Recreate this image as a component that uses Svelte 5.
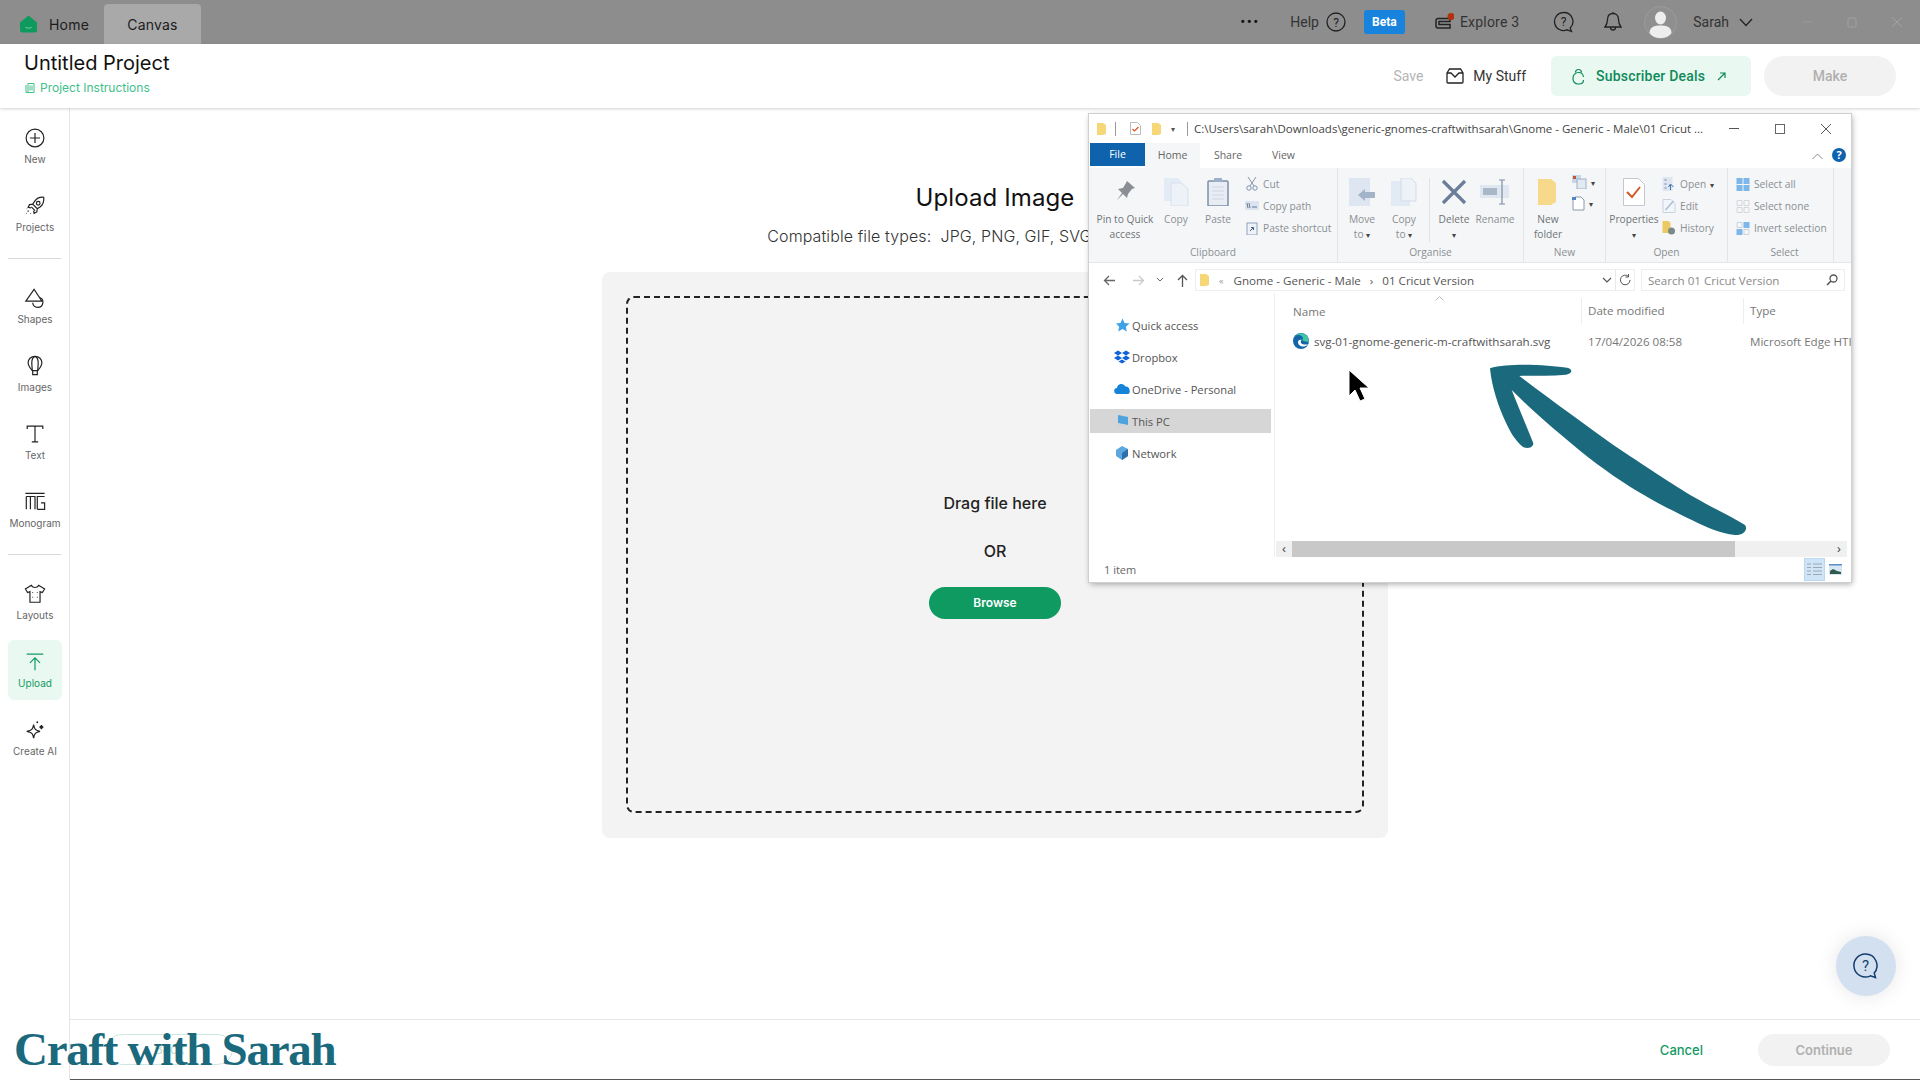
<script lang="ts">
  const navFolders = [
    { label: 'Quick access', kind: 'star' },
    { label: 'Dropbox', kind: 'dropbox' },
    { label: 'OneDrive - Personal', kind: 'cloud' },
    { label: 'This PC', kind: 'pc', active: true },
    { label: 'Network', kind: 'net' },
  ];
</script>

<div class="app">
  <header class="topbar">
    <div class="tabs">
      <div class="tab home">
        <svg width="17" height="18" viewBox="0 0 17 18"><path d="M0 7.500 8.500 0.500 17 7.500V15a2.500 2.500 0 0 1-2.500 2.500h-12A2.500 2.500 0 0 1 0 15Z" fill="#0d9a5c"/><path d="M5.500 12.500q3 1.500 6 0" fill="none" stroke="#7fc9a6" stroke-width="1"/></svg>
        <span>Home</span>
      </div>
      <div class="tab canvas">Canvas</div>
    </div>
    <div class="top-actions">
      <span class="dots">•••</span>
      <span class="help">Help</span>
      <svg class="help-ico" width="20" height="20" viewBox="0 0 20 20"><circle cx="10" cy="10" r="9" fill="none" stroke="#222" stroke-width="1.300"/><text x="10" y="14.500" text-anchor="middle" class="q">?</text></svg>
      <span class="beta">Beta</span>
      <span class="explore">
        <svg width="20" height="20" viewBox="0 0 20 20"><path d="M2 8.500a2 2 0 0 1 2-2h12v3H5v3h11v3.500H4a2 2 0 0 1-2-2Z" fill="none" stroke="#222" stroke-width="1.500"/><circle cx="17" cy="4.500" r="3.500" fill="#b3300f"/></svg>
        Explore 3
      </span>
      <svg class="bubble" width="21" height="22" viewBox="0 0 21 22"><path d="M10.500 1.500a9 9 0 1 0 3.500 17.300l4.500 1.700-1.300-3.600a9 9 0 0 0-6.700-15.400Z" fill="none" stroke="#222" stroke-width="1.300"/><text x="10.500" y="14.500" text-anchor="middle" class="q">?</text></svg>
      <svg class="bell" width="18" height="22" viewBox="0 0 18 22"><path d="M9 2.500c-3.500 0-5.500 2.500-5.500 6 0 4-1 5.500-2.500 7.500h16c-1.500-2-2.500-3.500-2.500-7.500 0-3.500-2-6-5.500-6ZM9 1v1.500M6.500 16.500a2.500 2.500 0 0 0 5 0" fill="none" stroke="#222" stroke-width="1.300"/></svg>
      <svg class="avatar" width="33" height="33" viewBox="0 0 33 33"><circle cx="16.500" cy="16.500" r="16" fill="#8f8f8f" stroke="#9c9c9c"/><ellipse cx="16.500" cy="12" rx="5.500" ry="6.500" fill="#eee"/><path d="M5.500 27c0-6 5-7.500 11-7.500s11 1.500 11 7.500c-2 3-6 5-11 5s-9-2-11-5Z" fill="#eee"/></svg>
      <span class="user">Sarah</span>
      <svg width="14" height="9" viewBox="0 0 14 9"><path d="M1 1l6 6.500L13 1" fill="none" stroke="#222" stroke-width="1.300"/></svg>
      <div class="win-ctrl">
        <svg width="12" height="12" viewBox="0 0 12 12"><path d="M1 6h10" stroke="#9a9a9a"/></svg>
        <svg width="12" height="12" viewBox="0 0 12 12"><rect x="2" y="2" width="8" height="9" rx="1.500" fill="none" stroke="#a3a3a3"/></svg>
        <svg width="12" height="12" viewBox="0 0 12 12"><path d="M1 1l10 10M11 1 1 11" stroke="#a3a3a3"/></svg>
      </div>
    </div>
  </header>

  <section class="projectbar">
    <div class="project-info">
      <h1>Untitled Project</h1>
      <div class="instructions">
        <svg width="10" height="11" viewBox="0 0 10 11"><path d="M3 1.500h6v9H3ZM1 3v7.500h2M5 3.500v5M7 3.500v5" fill="none" stroke="#3fbf8a"/></svg>
        Project Instructions
      </div>
    </div>
    <div class="project-actions">
      <span class="save">Save</span>
      <span class="mystuff">
        <svg width="18" height="16" viewBox="0 0 18 16"><path d="M1 5l2.500-4h11L17 5v9a1 1 0 0 1-1 1H2a1 1 0 0 1-1-1ZM1 5h4l4 4 4-4h4" fill="none" stroke="#222" stroke-width="1.300"/></svg>
        My Stuff
      </span>
      <div class="deals">
        <svg width="13" height="17" viewBox="0 0 13 17"><path d="M3.500 4.500a3 3 0 0 1 6 0M11.500 9a5 5 0 0 0-5-4.500A5.500 5.500 0 0 0 1 10v1a5 5 0 0 0 5 5h1c2.500 0 4.500-1.500 4.500-4" fill="none" stroke="#0e8a5a" stroke-width="1.200"/></svg>
        <span>Subscriber Deals</span>
        <svg class="deal-arrow" width="9" height="9" viewBox="0 0 9 9"><path d="M1 8l7-7M3 1h5v5" fill="none" stroke="#0e8a5a" stroke-width="1.200"/></svg>
      </div>
      <div class="make">Make</div>
    </div>
  </section>

  <div class="workspace">
    <nav class="sidebar">
      <div class="nav-item">
        <svg viewBox="0 0 24 24"><circle cx="12" cy="12" r="9.700"/><path d="M12 6.500v11M6.500 12h11"/></svg>
        <span>New</span>
      </div>
      <div class="nav-item">
        <svg viewBox="0 0 24 24"><path d="M21.500 2.500c-4-.5-7.500 1-10 4.500l-2 3 5 5 3-2c3.500-2.500 4.500-6.500 4-10.500ZM9.500 10l-3.500.500-1.500 3 3 .500M14.500 15l-.500 3.500-3 1.500-.500-3M8 13l4 4"/><circle cx="15.500" cy="9" r="2"/><path d="M5 17l-1 1M3 15h.500M7 20.500l.500-.500M2.500 20h.500"/></svg>
        <span>Projects</span>
      </div>
      <div class="divider"></div>
      <div class="nav-item">
        <svg viewBox="0 0 24 24"><path d="M11 2.500 2 15.500h17.500Z"/><path d="M16.500 11.200a5.600 5.600 0 1 1-7 6"/></svg>
        <span>Shapes</span>
      </div>
      <div class="nav-item">
        <svg viewBox="0 0 24 24"><path d="M12 1.500c-4.500 0-7.500 3-7.500 7 0 3.500 2.500 6 4.500 8.500h6c2-2.500 4.500-5 4.500-8.500 0-4-3-7-7.500-7Z"/><path d="M12 1.500c-2.500 1-3.500 4-3.500 7 0 3 .500 6 .500 8.500M12 1.500c2.500 1 3.500 4 3.500 7 0 3-.500 6-.500 8.500M9.500 17v4.500h5V17"/></svg>
        <span>Images</span>
      </div>
      <div class="nav-item">
        <svg viewBox="0 0 24 24"><path d="M3.500 6.500V3.500h17v3M12 3.500v17M8.500 20.500h7"/></svg>
        <span>Text</span>
      </div>
      <div class="nav-item">
        <svg viewBox="0 0 24 24"><path d="M1.500 2.500h21M2.500 6h9.500v14M2.500 6v14M7 6v14M14.500 20V6h8M14.500 20h8v-7h-4"/></svg>
        <span>Monogram</span>
      </div>
      <div class="divider"></div>
      <div class="nav-item">
        <svg viewBox="0 0 24 24"><path d="M8 2.500 1.500 6.500l2.500 4 2.500-1v11.500h11V9.500l2.500 1 2.500-4-6.500-4a4.500 4.500 0 0 1-8 0Z"/><path d="M9.500 10v1M14.500 10v1M9.500 15v1M14.500 15v1" stroke-width="1"/></svg>
        <span>Layouts</span>
      </div>
      <div class="nav-item active">
        <svg viewBox="0 0 24 24"><path d="M3 3.500h18M12 21V7.500M6.500 13 12 7.500l5.500 5.500"/></svg>
        <span>Upload</span>
      </div>
      <div class="nav-item">
        <svg viewBox="0 0 24 24"><path d="M10.500 6c.7 5 2 6.500 7 7.500-5 1-6.300 2.500-7 7.500-.7-5-2-6.500-7.500-7.500 5.500-1 6.800-2.500 7.500-7.500Z"/><path d="M19 6.500c.2 1.500.6 2 2 2.300-1.400.3-1.800.8-2 2.300-.2-1.500-.6-2-2-2.300 1.400-.3 1.800-.8 2-2.300Z" fill="#222"/><circle cx="14.500" cy="3.500" r="1" fill="#222" stroke="none"/></svg>
        <span>Create AI</span>
      </div>
    </nav>

    <main class="main">
      <div class="content">
        <h2>Upload Image</h2>
        <p class="types">Compatible file types:&nbsp; JPG, PNG, GIF, SVG, BMP, HEIC, DXF</p>
        <div class="panel">
          <div class="dropzone">
            <div class="drag">Drag file here</div>
            <div class="or">OR</div>
            <div class="browse">Browse</div>
          </div>
        </div>
      </div>
      <footer class="footer">
        <div class="back">Back</div>
        <div class="footer-right">
          <span class="cancel">Cancel</span>
          <div class="continue">Continue</div>
        </div>
      </footer>
    </main>
  </div>

  <div class="fab">
    <svg width="28" height="28" viewBox="0 0 28 28"><path d="M13.500 2a11.500 11.500 0 1 0 5 21.800l5 1.700-1.300-4.500A11.500 11.500 0 0 0 13.500 2Z" fill="none" stroke="#123e6e" stroke-width="1.500"/><text x="13.500" y="18.500" text-anchor="middle" class="fab-q">?</text></svg>
  </div>

  <div class="logo">Craft with Sarah</div>

  <!-- explorer window sits on top of the page -->
  <div class="explorer">
    <div class="ex-title">
      <svg class="folder" width="9" height="12" viewBox="0 0 9 12"><path d="M0 0h6l3 2v9l-3 1H0Z" fill="#f6d778"/></svg>
      <i class="ex-sep"></i>
      <svg width="11" height="13" viewBox="0 0 11 13"><path d="M.5.500h7l3 3v9H.5Z" fill="#fff" stroke="#bbb"/><path d="M2.500 7l2 2 4-4" fill="none" stroke="#d9541e" stroke-width="1.200"/></svg>
      <svg class="folder" width="9" height="12" viewBox="0 0 9 12"><path d="M0 0h6l3 2v9l-3 1H0Z" fill="#f6d778"/></svg>
      <span class="mini-drop">▾</span>
      <i class="ex-sep"></i>
      <span class="ex-path">C:\Users\sarah\Downloads\generic-gnomes-craftwithsarah\Gnome - Generic - Male\01 Cricut ...</span>
      <div class="ex-ctrl">
        <svg width="12" height="12" viewBox="0 0 12 12"><path d="M1 5.500h10" stroke="#555"/></svg>
        <svg width="12" height="12" viewBox="0 0 12 12"><rect x="1.500" y="1.500" width="9" height="9" fill="none" stroke="#666"/></svg>
        <svg width="12" height="12" viewBox="0 0 12 12"><path d="M1 1l10 10M11 1 1 11" stroke="#555"/></svg>
      </div>
    </div>

    <div class="ex-tabs">
      <span class="ex-file">File</span>
      <span class="ex-tab on">Home</span>
      <span class="ex-tab share">Share</span>
      <span class="ex-tab">View</span>
      <svg class="ex-up" width="11" height="7" viewBox="0 0 11 7"><path d="M.5 6 5.500 1l5 5" fill="none" stroke="#888"/></svg>
      <span class="ex-help">?</span>
    </div>

    <div class="ribbon">
      <div class="group clipboard">
        <div class="group-body">
          <div class="big dark" style="width:72px">
            <svg width="24" height="28" viewBox="0 0 24 28"><path d="M14 3l8 7-3 1-4 5-1 4-4-4-6 6 5-7-4-4 5-1 3-5Z" fill="#8a8f96"/></svg>
            <span>Pin to Quick<br />access</span>
          </div>
          <div class="big" style="width:30px">
            <svg width="26" height="28" viewBox="0 0 26 28"><path d="M1 0h14l3 3v20H1Z" fill="#e3ebf5"/><path d="M8 5h11l6 6v17H8Z" fill="#edf2f8" stroke="#d7e0ea"/></svg>
            <span>Copy</span>
          </div>
          <div class="big" style="width:54px">
            <svg width="22" height="28" viewBox="0 0 22 28"><rect x="1" y="3" width="20" height="25" rx="1" fill="#e8edf4" stroke="#7b8fab" stroke-width="1.500"/><rect x="7" y="0" width="8" height="4" fill="#9db0c9"/><path d="M5 9h12M5 13h12M5 17h12M5 21h12" stroke="#ccd6e3"/></svg>
            <span>Paste</span>
          </div>
          <div class="small-list">
            <div class="small"><svg width="12" height="14" viewBox="0 0 12 14"><path d="M2 0l6 9M10 0 4 9" stroke="#8a93a0"/><circle cx="3" cy="11" r="2.200" fill="none" stroke="#7f95b3"/><circle cx="9" cy="11" r="2.200" fill="none" stroke="#7f95b3"/></svg>Cut</div>
            <div class="small"><svg width="14" height="10" viewBox="0 0 14 10"><rect width="14" height="9" fill="#dbe4f0"/><path d="M2 2l1 5M4 2l1 5M7 6h5" stroke="#66788f"/></svg>Copy path</div>
            <div class="small"><svg width="12" height="14" viewBox="0 0 12 14"><rect x="1" y="2" width="10" height="12" fill="#eef2f8" stroke="#8ea2bd"/><path d="M4 10l3-3M5 6.500h2.500V9" stroke="#445b7c" fill="none"/></svg>Paste shortcut</div>
          </div>
        </div>
        <div class="group-label">Clipboard</div>
      </div>

      <div class="group organise">
        <div class="group-body">
          <div class="big" style="width:48px">
            <svg width="28" height="28" viewBox="0 0 28 28"><rect x="1" y="0" width="21" height="28" fill="#dde6f1"/><path d="M10 17l7-6v3h10v6H17v3Z" fill="#a3b3c8"/></svg>
            <span>Move<br />to <em>▾</em></span>
          </div>
          <div class="big" style="width:36px">
            <svg width="26" height="28" viewBox="0 0 26 28"><rect x="0" y="3" width="19" height="25" fill="#e2eaf4"/><path d="M10 0h10l5 5v18H10Z" fill="#edf2f8" stroke="#d2dce8"/></svg>
            <span>Copy<br />to <em>▾</em></span>
          </div>
          <i class="v-sep"></i>
          <div class="big dark" style="width:48px">
            <svg width="26" height="28" viewBox="0 0 26 28"><path d="M2 3l22 22M24 3 2 25" stroke="#6a7d99" stroke-width="3.200"/></svg>
            <span>Delete<br /><em>▾</em></span>
          </div>
          <div class="big" style="width:34px">
            <svg width="30" height="28" viewBox="0 0 30 28"><rect x="0" y="7" width="29" height="13" fill="#dfe7f1"/><rect x="3" y="10" width="14" height="7" fill="#a9b7c9"/><path d="M19 2h6M22 2v24M19 26h6" stroke="#7d8ea5" stroke-width="1.200"/></svg>
            <span>Rename</span>
          </div>
        </div>
        <div class="group-label">Organise</div>
      </div>

      <div class="group newgroup">
        <div class="group-body">
          <div class="big dark" style="width:48px">
            <svg width="20" height="28" viewBox="0 0 20 28"><path d="M0 1h13l5 4v19l-5 3H0Z" fill="#f6d98a"/></svg>
            <span>New<br />folder</span>
          </div>
          <div class="tiny-stack">
            <div><svg width="15" height="14" viewBox="0 0 15 14"><rect x="0" y="0" width="9" height="8" fill="#c7d6e8"/><rect x="1" y="1" width="3" height="3" fill="#c2562f"/><rect x="5" y="4" width="9" height="10" fill="#e3e9f1" stroke="#9fb0c5"/></svg><em>▾</em></div>
            <div><svg width="13" height="15" viewBox="0 0 13 15"><path d="M3 1h6l3 3v10H1V4Z" fill="#fff" stroke="#8b98aa"/><path d="M0 1h4v3H0Z" fill="#4f86c4"/></svg><em>▾</em></div>
          </div>
        </div>
        <div class="group-label">New</div>
      </div>

      <div class="group opengroup">
        <div class="group-body">
          <div class="big dark" style="width:56px">
            <svg width="22" height="28" viewBox="0 0 22 28"><path d="M.5.500h15l6 6v21H.5Z" fill="#fff" stroke="#c4c8ce"/><path d="M4 14l5 5 8-10" fill="none" stroke="#d2582a" stroke-width="2"/></svg>
            <span>Properties<br /><em>▾</em></span>
          </div>
          <div class="small-list">
            <div class="small"><svg width="13" height="14" viewBox="0 0 13 14"><rect width="10" height="14" fill="#dde6f1"/><path d="M2 3h2M2 7h2M2 11h2" stroke="#6f7f95"/><path d="M8 13V8M6 10l2-3 3 3" stroke="#3f74b0" fill="none"/></svg>Open <em>▾</em></div>
            <div class="small"><svg width="13" height="14" viewBox="0 0 13 14"><path d="M.5.500h8l4 4v9H.5Z" fill="#f2f5f9" stroke="#c9d3df"/><path d="M3 11 11 2" stroke="#a8bdd6" stroke-width="1.500"/></svg>Edit</div>
            <div class="small"><svg width="13" height="14" viewBox="0 0 13 14"><path d="M0 0h6l2 2v10H0Z" fill="#ecc963"/><circle cx="9" cy="10" r="3.500" fill="#7a8a88"/></svg>History</div>
          </div>
        </div>
        <div class="group-label">Open</div>
      </div>

      <div class="group selectgroup">
        <div class="group-body">
          <div class="small-list">
            <div class="small"><svg width="13" height="13" viewBox="0 0 13 13"><rect width="13" height="13" fill="#7db6ea"/><path d="M6.500 0v13M0 6.500h13" stroke="#f4f6f8"/></svg>Select all</div>
            <div class="small"><svg width="13" height="13" viewBox="0 0 13 13"><path d="M.5.500h5v5h-5ZM7.500.500h5v5h-5ZM.5 7.500h5v5h-5ZM7.500 7.500h5v5h-5Z" fill="none" stroke="#d4d8dd"/></svg>Select none</div>
            <div class="small"><svg width="13" height="13" viewBox="0 0 13 13"><path d="M7 0h6v6H7ZM0 7h6v6H0Z" fill="#7db6ea"/><path d="M.5.500h5v5h-5ZM7.500 7.500h5v5h-5Z" fill="none" stroke="#ccd3da"/></svg>Invert selection</div>
          </div>
        </div>
        <div class="group-label">Select</div>
      </div>
    </div>

    <div class="addr-row">
      <svg width="13" height="11" viewBox="0 0 13 11"><path d="M12 5.500H1.500M6 1 1.500 5.500 6 10" fill="none" stroke="#666" stroke-width="1.300"/></svg>
      <svg class="fwd" width="13" height="11" viewBox="0 0 13 11"><path d="M1 5.500h10.500M7 1l4.500 4.500L7 10" fill="none" stroke="#c9c9c9" stroke-width="1.300"/></svg>
      <svg class="recent" width="8" height="6" viewBox="0 0 8 6"><path d="M1 1l3 3 3-3" fill="none" stroke="#666"/></svg>
      <svg class="up" width="11" height="13" viewBox="0 0 11 13"><path d="M5.500 13V2M1 6l4.500-4.500L10 6" fill="none" stroke="#555" stroke-width="1.300"/></svg>
      <div class="addr">
        <svg width="9" height="12" viewBox="0 0 9 12"><path d="M0 0h6l3 2v9l-3 1H0Z" fill="#f6d778"/></svg>
        <span class="crumb-more">«</span>
        <span>Gnome - Generic - Male</span>
        <b>›</b>
        <span>01 Cricut Version</span>
        <svg class="addr-drop" width="10" height="7" viewBox="0 0 10 7"><path d="M1 1l4 4 4-4" fill="none" stroke="#555" stroke-width="1.200"/></svg>
        <div class="refresh">
          <svg width="12" height="12" viewBox="0 0 12 12"><path d="M9.500 2.500A4.800 4.800 0 1 0 11 6M9.500 0v3h-3" fill="none" stroke="#555"/></svg>
        </div>
      </div>
      <div class="search">
        <span>Search 01 Cricut Version</span>
        <svg width="12" height="12" viewBox="0 0 12 12"><circle cx="7.500" cy="4.500" r="3.500" fill="none" stroke="#555" stroke-width="1.300"/><path d="M5 7 1 11" stroke="#555" stroke-width="1.600"/></svg>
      </div>
    </div>

    <div class="ex-body">
      <div class="nav-pane">
        {#each navFolders as f}
          <div class="pane-row" class:sel={f.active}>
            <svg width="16" height="16" viewBox="0 0 16 16">
              {#if f.kind === 'star'}
                <path d="M8.500 1.500l2 4.500 5 .5-3.700 3.300 1 4.700-4.300-2.500-4.300 2.500 1-4.700L2 6.500l4.500-.5Z" fill="#3ea2e8"/>
              {:else if f.kind === 'dropbox'}
                <path d="M4 1.500 8 4 4 6.500 0 4ZM12 1.500 16 4l-4 2.500L8 4ZM4 6.500 8 9l-4 2.500L0 9ZM12 6.500 16 9l-4 2.500L8 9ZM4.500 12.500 8 10.500l3.500 2L8 14.500Z" fill="#0f62d8"/>
              {:else if f.kind === 'cloud'}
                <path d="M3.500 13a3 3 0 0 1-.5-6 4.500 4.500 0 0 1 8.500-1.500A3.800 3.800 0 0 1 15.500 9a3.500 3.500 0 0 1-1 4Z" fill="#1583d8"/>
              {:else if f.kind === 'pc'}
                <path d="M4 2l10 2v8L4 10Z" fill="#4ea3dd"/><path d="M1 13l5-2 7 1-4 2H3Z" fill="#cfd4da"/>
              {:else}
                <path d="M8 1l6 3v7l-6 4-6-4V5Z" fill="#5ca7dd"/><path d="M8 8l6-4v7l-6 4Z" fill="#2d6fa8"/>
              {/if}
            </svg>
            <span>{f.label}</span>
          </div>
        {/each}
      </div>

      <div class="files">
        <div class="col-head">
          <span class="c-name">Name</span>
          <span class="c-date">Date modified</span>
          <span class="c-type">Type</span>
          <svg class="sort" width="9" height="5" viewBox="0 0 9 5"><path d="M.5 4.500l4-4 4 4" fill="none" stroke="#bbb"/></svg>
        </div>
        <div class="file-row">
          <span class="c-name">
            <svg width="16" height="16" viewBox="0 0 16 16"><circle cx="8" cy="8" r="8" fill="#1566a8"/><path d="M15.900 9A8 8 0 0 0 2 3c2-1.500 6-1.500 7.500 1 1 1.500 .5 2.500-.5 3 2 1.500 5 1.500 6.900 2Z" fill="#41c6a5"/><path d="M5 9c0 3 3 5 6 4.500 1.500-.2 3-1.200 4-2.500-2 .800-5 .800-6.500-.5C7 9 8 7 9 7 6.500 6 5 7.500 5 9Z" fill="#fff"/></svg>
            svg-01-gnome-generic-m-craftwithsarah.svg
          </span>
          <span class="c-date">17/04/2026 08:58</span>
          <span class="c-type">Microsoft Edge HTI</span>
        </div>
        <div class="hscroll">
          <span class="sb-btn">‹</span>
          <span class="sb-thumb"></span>
          <span class="sb-track"></span>
          <span class="sb-btn">›</span>
        </div>
      </div>
    </div>

    <div class="statusbar">
      <span>1 item</span>
      <div class="views">
        <span class="view on">
          <svg width="15" height="13" viewBox="0 0 15 13"><path d="M0 1h4M6 1h9M0 4.500h4M6 4.500h9M0 8h4M6 8h9M0 11.500h4M6 11.500h9" stroke="#9aa7b5"/></svg>
        </span>
        <span class="view">
          <svg width="13" height="11" viewBox="0 0 13 11"><rect width="13" height="11" fill="#d7e6f4"/><path d="M1 7l3-2 4 2 4 1v2H1Z" fill="#2f5b4e"/><path d="M0 0h13v1.500H0Z" fill="#5b8fc4"/></svg>
        </span>
      </div>
    </div>
  </div>

  <svg class="big-arrow" width="400" height="300" viewBox="0 0 1200 900">
    <path d="M30 235C90 218 200 225 265 234C280 240 275 252 258 254C210 258 160 256 118 258C220 335 310 400 400 465C490 525 580 585 640 620C700 655 755 680 795 705C805 720 790 736 765 735C720 730 680 712 640 692C560 655 500 620 450 590C380 545 320 500 250 440C195 395 140 345 95 300C115 350 140 410 160 460C160 474 140 478 128 470C105 450 90 425 78 398C55 350 35 290 30 235Z" fill="#1b697d"/>
  </svg>

  <svg class="cursor" width="24" height="36" viewBox="0 0 24 36">
    <path d="M2 1v26l6-6 5 11 5-2-5-11h9Z" fill="#000" stroke="#fff" stroke-width="1"/>
  </svg>
</div>

<style>
  :global(body) {
    margin: 0;
    background: #fff;
    font-family: "Inter", "Liberation Sans", sans-serif;
    color: #222;
  }

  .app {
    position: relative;
    width: 1920px;
    height: 1080px;
    display: flex;
    flex-direction: column;
    overflow: hidden;
  }

  /* ── top bar ── */
  .topbar {
    height: 44px;
    flex: none;
    background: #8d8d8d;
    display: flex;
    justify-content: space-between;
    align-items: stretch;
  }
  .tabs {
    display: flex;
    padding-top: 4px;
    padding-left: 20px;
  }
  .tab {
    display: flex;
    align-items: center;
    font-size: 14px;
    color: #1c1c1c;
    letter-spacing: .2px;
  }
  .home { gap: 12px; width: 84px; }
  .canvas {
    width: 97px;
    justify-content: center;
    background: #a9a9a9;
    border-radius: 4px 4px 0 0;
  }
  .top-actions {
    display: flex;
    align-items: center;
    font-family: "Roboto", sans-serif;
    font-size: 14px;
    color: #333;
    padding-right: 17px;
  }
  .dots { font-size: 15px; letter-spacing: 1.500px; width: 50px; color: #111; }
  .help { margin-right: 7px; }
  .help-ico { margin-right: 18px; }
  .q { font: 12px "Roboto", sans-serif; fill: #222; }
  .beta {
    width: 41px;
    height: 24px;
    line-height: 24px;
    text-align: center;
    background: #1883dc;
    border-radius: 3px;
    color: #fff;
    font-size: 12px;
    font-weight: 700;
    margin-right: 29px;
  }
  .explore { display: flex; align-items: center; gap: 6px; margin-right: 34px; letter-spacing: .2px; }
  .bubble { margin-right: 30px; }
  .bell { margin-right: 22px; }
  .avatar { margin-right: 16px; }
  .user { margin-right: 10px; }
  .win-ctrl { display: flex; gap: 33px; margin-left: 48px; }

  /* ── project bar ── */
  .projectbar {
    position: relative;
    z-index: 2;
    height: 64px;
    flex: none;
    background: #fff;
    box-shadow: 0 1px 3px rgba(0, 0, 0, .18);
    display: flex;
    justify-content: space-between;
    align-items: flex-start;
  }
  .project-info { padding: 6px 0 0 24px; }
  h1 {
    margin: 0 0 4px;
    font-size: 20px;
    font-weight: 400;
    line-height: 26px;
    color: #111;
  }
  .instructions {
    display: flex;
    align-items: center;
    gap: 5px;
    font-size: 12px;
    color: #3fbf8a;
    padding-left: 1px;
  }
  .project-actions {
    display: flex;
    align-items: center;
    font-family: "Roboto", sans-serif;
    font-size: 14px;
    padding: 12px 24px 0 0;
  }
  .save { color: #b5b5b5; margin-right: 23px; }
  .mystuff { display: flex; align-items: center; gap: 9px; color: #333; margin-right: 25px; }
  .deals {
    width: 200px;
    height: 40px;
    box-sizing: border-box;
    padding-left: 21px;
    display: flex;
    align-items: center;
    gap: 11px;
    border-radius: 6px;
    background: #e9f8f1;
    color: #0e8a5a;
    font-weight: 500;
    letter-spacing: .2px;
    margin-right: 13px;
  }
  .deal-arrow { margin-left: 1px; }
  .make {
    width: 132px;
    height: 40px;
    line-height: 40px;
    text-align: center;
    border-radius: 20px;
    background: #f2f2f2;
    color: #b0b0b0;
    font-weight: 500;
  }

  /* ── sidebar ── */
  .workspace { flex: 1; display: flex; min-height: 0; }
  .sidebar {
    width: 69px;
    flex: none;
    border-right: 1px solid #e6e6e6;
    padding-top: 8px;
    display: flex;
    flex-direction: column;
    gap: 8px;
  }
  .nav-item {
    height: 60px;
    margin: 0 7px 0 8px;
    box-sizing: border-box;
    padding-top: 11px;
    display: flex;
    flex-direction: column;
    align-items: center;
    gap: 4px;
    border-radius: 6px;
    font-size: 10px;
    line-height: 13px;
    color: #666;
    white-space: nowrap;
  }
  .nav-item svg {
    width: 22px;
    height: 22px;
    flex: none;
    fill: none;
    stroke: #222;
    stroke-width: 1.300;
  }
  .nav-item.active { background: #e9f8f1; color: #129a63; }
  .nav-item.active svg { stroke: #129a63; }
  .divider { height: 1px; background: #d8d8d8; margin: 6px 8px 9px; }

  /* ── main ── */
  .main { flex: 1; min-width: 0; display: flex; flex-direction: column; }
  .content {
    flex: 1;
    display: flex;
    flex-direction: column;
    align-items: center;
    padding-top: 75px;
  }
  h2 {
    margin: 0 0 13px;
    font-size: 24px;
    font-weight: 400;
    line-height: 30px;
    letter-spacing: .1px;
    color: #111;
  }
  .types {
    margin: 0 0 26px;
    font-size: 16px;
    line-height: 20px;
    letter-spacing: .1px;
    color: #333;
    font-weight: 300;
  }
  .panel {
    width: 786px;
    height: 566px;
    box-sizing: border-box;
    padding: 24px 24px 25px;
    background: #f3f3f3;
    border-radius: 8px;
  }
  .dropzone {
    height: 100%;
    box-sizing: border-box;
    border: 2px dashed #222;
    border-radius: 8px;
    padding-top: 3px;
    display: flex;
    flex-direction: column;
    align-items: center;
    justify-content: center;
  }
  .drag { font-size: 16px; line-height: 20px; font-weight: 500; }
  .or { font-size: 16px; line-height: 20px; font-weight: 500; margin-top: 28px; }
  .browse {
    margin-top: 26px;
    width: 132px;
    height: 32px;
    line-height: 32px;
    text-align: center;
    border-radius: 16px;
    background: #0f9a62;
    color: #fff;
    font-size: 12px;
    font-weight: 600;
  }
  .footer {
    height: 59px;
    flex: none;
    border-top: 1px solid #e6e6e6;
    border-bottom: 1px solid #555;
    display: flex;
    justify-content: space-between;
    align-items: center;
    padding: 0 30px 0 36px;
  }
  .back {
    width: 127px;
    height: 31px;
    line-height: 29px;
    box-sizing: border-box;
    border: 1px solid #cfe6de;
    border-radius: 16px;
    text-align: center;
    font-size: 13px;
    color: #bcdcd1;
  }
  .footer-right { display: flex; align-items: center; gap: 55px; }
  .cancel { font-size: 13px; font-weight: 500; color: #129a63; }
  .continue {
    width: 132px;
    height: 32px;
    line-height: 32px;
    text-align: center;
    border-radius: 16px;
    background: #f2f2f2;
    color: #b0b0b0;
    font-size: 13px;
    font-weight: 600;
  }

  .fab {
    position: absolute;
    left: 1836px;
    top: 936px;
    width: 60px;
    height: 60px;
    border-radius: 50%;
    background: #d3e0f0;
    box-shadow: 0 0 20px rgba(0, 0, 0, .1);
    display: flex;
    align-items: center;
    justify-content: center;
  }
  .fab-q { font: 15px "Roboto", sans-serif; fill: #123e6e; }

  .logo {
    position: absolute;
    left: 14px;
    top: 1024px;
    font-family: "Liberation Serif", serif;
    font-size: 47px;
    font-weight: 700;
    line-height: 50px;
    letter-spacing: -1.300px;
    color: #1b697d;
    white-space: nowrap;
  }

  /* ── explorer window ── */
  .explorer {
    position: absolute;
    left: 1089px;
    top: 114px;
    width: 762px;
    height: 468px;
    background: #fff;
    box-shadow: 0 0 0 1px #d0d0d0, 1px 2px 6px rgba(0, 0, 0, .35);
    display: flex;
    flex-direction: column;
    font-family: "Open Sans", sans-serif;
    font-size: 11px;
    color: #666;
    white-space: nowrap;
  }
  .ex-title {
    height: 29px;
    flex: none;
    display: flex;
    align-items: center;
    padding-left: 8px;
  }
  .ex-sep { width: 1px; height: 14px; background: #999; margin: 0 14px 0 9px; }
  .ex-title .folder + .mini-drop { margin-left: 10px; }
  .ex-title svg + .folder { margin-left: 11px; }
  .mini-drop { font-size: 8px; color: #555; margin-right: 0; }
  .ex-title .mini-drop + .ex-sep { margin-left: 12px; margin-right: 6px; }
  .ex-path { font-size: 11.500px; color: #444; width: 527px; }
  .ex-ctrl { display: flex; gap: 34px; margin-left: 7px; }
  .ex-tabs {
    height: 25px;
    flex: none;
    display: flex;
    align-items: center;
    position: relative;
  }
  .ex-file {
    width: 55px;
    height: 23px;
    margin-left: 1px;
    margin-bottom: 2px;
    line-height: 23px;
    text-align: center;
    background: #0f63ad;
    color: #fff;
    font-size: 10.500px;
  }
  .ex-tab { width: 55px; height: 25px; line-height: 25px; text-align: center; font-size: 10.500px; }
  .ex-tab.share { width: 56px; }
  .ex-tab:last-of-type { width: 45px; }
  .ex-tab.on { background: #f5f6f7; }
  .ex-up { position: absolute; right: 28px; top: 10px; }
  .ex-help {
    position: absolute;
    right: 5px;
    top: 5px;
    width: 14px;
    height: 14px;
    line-height: 14px;
    border-radius: 50%;
    background: #0f63ad;
    color: #fff;
    text-align: center;
    font-size: 11px;
    font-weight: 700;
  }

  .ribbon {
    height: 95px;
    flex: none;
    background: #f5f6f7;
    display: flex;
    border-bottom: 1px solid #e4e6e8;
    box-sizing: border-box;
    font-size: 10.200px;
    color: #8a8f94;
  }
  .group {
    display: flex;
    flex-direction: column;
    border-right: 1px solid #e3e5e7;
    box-sizing: border-box;
    padding-top: 10px;
  }
  .clipboard { width: 249px; }
  .organise { width: 186px; }
  .newgroup { width: 82px; }
  .opengroup { width: 122px; }
  .selectgroup { width: 106px; padding-left: 8px; }
  .group-body { flex: 1; display: flex; min-height: 0; }
  .group-label { height: 20px; line-height: 20px; text-align: center; }
  .big {
    display: flex;
    flex-direction: column;
    align-items: center;
    text-align: center;
    line-height: 15px;
    flex: none;
  }
  .big svg { flex: none; height: 28px; margin-bottom: 6px; }
  .big.dark { color: #6f7478; }
  .big em, .small em, .tiny-stack em { font-style: normal; font-size: 8px; color: #444; }
  .v-sep { width: 1px; height: 64px; background: #e0e2e4; margin: 0 0 0 7px; flex: none; }
  .small-list {
    display: flex;
    flex-direction: column;
    margin-top: -5px;
  }
  .small {
    display: flex;
    align-items: center;
    gap: 4px;
    height: 22px;
  }
  .small svg { flex: none; }
  .small-list .small:nth-child(1) svg,
  .small-list .small:nth-child(2) svg,
  .small-list .small:nth-child(3) svg { width: 14px; }
  .tiny-stack {
    display: flex;
    flex-direction: column;
    gap: 7px;
    margin-top: -3px;
  }
  .tiny-stack div { display: flex; align-items: center; gap: 4px; }

  .addr-row {
    height: 30px;
    flex: none;
    box-sizing: border-box;
    display: flex;
    align-items: center;
    padding: 4px 0 0 14px;
    font-size: 11.600px;
    color: #555;
  }
  .fwd { margin-left: 16px; }
  .recent { margin-left: 11px; }
  .up { margin-left: 13px; margin-right: 7px; }
  .addr, .search {
    height: 22px;
    box-sizing: border-box;
    border: 1px solid #eceef0;
    display: flex;
    align-items: center;
  }
  .addr { width: 440px; padding-left: 4px; gap: 9px; }
  .addr b { font-weight: 400; color: #555; }
  .crumb-more { color: #999; font-size: 9px; margin: 0 1px; }
  .addr-drop { margin-left: auto; }
  .refresh {
    width: 18px;
    height: 20px;
    display: flex;
    align-items: center;
    justify-content: center;
    border-left: 1px solid #e8e8e8;
    margin-left: -6px;
  }
  .search {
    width: 204px;
    margin-left: 6px;
    padding: 0 6px;
    justify-content: space-between;
    color: #8a8a8a;
  }

  .ex-body { flex: 1; display: flex; min-height: 0; }
  .nav-pane {
    width: 186px;
    flex: none;
    box-sizing: border-box;
    border-right: 1px solid #f0f0f0;
    padding: 20px 3px 0 1px;
    display: flex;
    flex-direction: column;
    gap: 8px;
  }
  .pane-row {
    height: 24px;
    display: flex;
    align-items: center;
    gap: 2px;
    padding-left: 24px;
    color: #555;
    font-size: 11.200px;
  }
  .pane-row.sel { background: #d6d6d6; }

  .files {
    flex: 1;
    min-width: 0;
    display: flex;
    flex-direction: column;
    position: relative;
    font-size: 11.600px;
  }
  .col-head, .file-row {
    display: flex;
    align-items: center;
    color: #777;
  }
  .col-head { height: 36px; }
  .file-row { height: 24px; }
  .c-name {
    width: 306px;
    padding-left: 18px;
    box-sizing: border-box;
    display: flex;
    align-items: center;
    gap: 5px;
    flex: none;
  }
  .file-row .c-name { color: #555; }
  .c-date { width: 162px; flex: none; padding-left: 18px; box-sizing: border-box; }
  .c-type { overflow: hidden; flex: 1; }
  .col-head .c-date, .col-head .c-type { border-left: 1px solid #eee; height: 26px; line-height: 26px; padding-left: 6px; }
  .file-row .c-date { padding-left: 7px; }
  .file-row .c-type { padding-left: 7px; }
  .sort { position: absolute; left: 160px; top: 3px; }
  .hscroll {
    margin-top: auto;
    margin-left: 1px;
    height: 16px;
    width: 571px;
    display: flex;
    background: #f0f0f0;
  }
  .sb-btn { width: 16px; line-height: 14px; text-align: center; color: #444; font-size: 13px; flex: none; }
  .sb-thumb { width: 443px; background: #c8c8c8; flex: none; }
  .sb-track { flex: 1; }

  .statusbar {
    height: 25px;
    flex: none;
    display: flex;
    align-items: center;
    justify-content: space-between;
    padding-left: 15px;
    position: relative;
  }
  .views { display: flex; align-items: center; gap: 4px; padding-right: 9px; }
  .view { display: flex; align-items: center; justify-content: center; }
  .view.on { width: 21px; height: 23px; background: #cfe5f7; border: 1px solid #b9d9f1; box-sizing: border-box; }

  .big-arrow { position: absolute; left: 1480px; top: 290px; }
  .cursor { position: absolute; left: 1347px; top: 369px; }
</style>
